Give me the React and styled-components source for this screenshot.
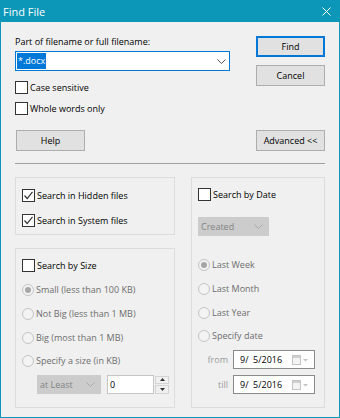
import styled, { createGlobalStyle } from "styled-components";

const GlobalStyle = createGlobalStyle`
  html, body {
    margin: 0;
    padding: 0;
    background: #f0f0f0;
  }
  body {
    font-family: "Open Sans", "Noto Sans", sans-serif;
    font-size: 9px;
    color: #000;
  }
  * {
    box-sizing: border-box;
  }
`;

const Window = styled.div`
  width: 340px;
  height: 418px;
  border: 1px solid #0c96b7;
  background: #f0f0f0;
  display: flex;
  flex-direction: column;
`;

const TitleBar = styled.div`
  height: 21px;
  flex: none;
  background: #0c96b7;
  color: #fff;
  display: flex;
  align-items: center;
  justify-content: space-between;
  padding: 0 8px 0 2px;
  font-size: 11px;
`;

const Body = styled.div`
  padding: 12px 14px 0 14px;
  display: flex;
  flex-direction: column;
`;

const TopSection = styled.div`
  display: flex;
  justify-content: space-between;
  align-items: flex-start;
`;

const LeftCol = styled.div`
  width: 215px;
  display: flex;
  flex-direction: column;
`;

const RightCol = styled.div`
  width: 69px;
  margin-top: 2px;
  display: flex;
  flex-direction: column;
  gap: 8px;
`;

const Label = styled.div`
  height: 15px;
  line-height: 15px;
`;

const Combo = styled.div`
  margin-top: 2px;
  height: 20px;
  background: #fff;
  border: 1px solid #0078d7;
  display: flex;
  align-items: center;
  justify-content: space-between;
  padding: 0 3px 0 1px;
`;

const Selected = styled.span`
  background: #0078d7;
  color: #fff;
  line-height: 16px;
  padding: 0 1px;
`;

const CheckRow = styled.label`
  display: flex;
  align-items: center;
  gap: 2px;
  height: 17px;
  margin-top: ${(p) => p.$mt || 0}px;
  color: ${(p) => (p.$disabled ? "#6d6d6d" : "#000")};
  white-space: nowrap;
`;

const Box = styled.span`
  width: 13px;
  height: 13px;
  flex: none;
  background: #fff;
  border: 1px solid #333;
  display: flex;
  align-items: center;
  justify-content: center;
`;

const Radio = styled.span`
  width: 12px;
  height: 12px;
  flex: none;
  border-radius: 50%;
  border: 1px solid #c4c4c4;
  background: #f3f3f3;
  display: flex;
  align-items: center;
  justify-content: center;
  &::after {
    content: "";
    width: 6px;
    height: 6px;
    border-radius: 50%;
    background: ${(p) => (p.$on ? "#a6a6a6" : "transparent")};
  }
`;

const Button = styled.div`
  width: 69px;
  height: 21px;
  background: #e1e1e1;
  border: 1px solid ${(p) => (p.$default ? "#0078d7" : "#adadad")};
  box-shadow: ${(p) => (p.$default ? "inset 0 0 0 1px #0078d7" : "none")};
  display: flex;
  align-items: center;
  justify-content: center;
`;

const ButtonRow = styled.div`
  margin-top: 13px;
  display: flex;
  justify-content: space-between;
  padding-left: 1px;
`;

const Separator = styled.div`
  margin-top: 12px;
  height: 1px;
  background: #a0a0a0;
`;

const Groups = styled.div`
  margin-top: 13px;
  display: grid;
  grid-template-columns: 160px 134px;
  column-gap: 16px;
`;

const Stack = styled.div`
  display: flex;
  flex-direction: column;
  gap: 13px;
`;

const GroupBox = styled.div`
  height: ${(p) => p.$h}px;
  border: 1px solid #dcdcdc;
  padding: ${(p) => p.$pt}px 0 0 6px;
  display: flex;
  flex-direction: column;
`;

const InlineRow = styled.div`
  display: flex;
  align-items: center;
  margin-top: ${(p) => p.$mt || 0}px;
  margin-left: ${(p) => p.$ml || 0}px;
  gap: ${(p) => p.$gap || 0}px;
`;

const DisabledSelect = styled.div`
  width: ${(p) => p.$w}px;
  height: 19px;
  background: #cccccc;
  border: 1px solid #cccccc;
  color: #838383;
  display: flex;
  align-items: center;
  justify-content: space-between;
  padding: 0 5px 0 2px;
`;

const NumberInput = styled.div`
  width: 47px;
  height: 19px;
  background: #fff;
  border: 1px solid #c6c6c6;
  padding-left: 2px;
  display: flex;
  align-items: center;
`;

const Spinner = styled.div`
  width: 14px;
  height: 18px;
  display: flex;
  flex-direction: column;
  gap: 1px;
  margin-left: 1px;
`;

const SpinHalf = styled.div`
  flex: 1;
  border: 1px solid #d4d4d4;
  background: #f0f0f0;
  display: flex;
  align-items: center;
  justify-content: center;
`;

const DateLabel = styled.span`
  width: 30px;
  text-align: right;
  color: #9a9a9a;
`;

const DateInput = styled.div`
  width: 82px;
  height: 19px;
  background: #fff;
  border: 1px solid #8a8a8a;
  display: flex;
  align-items: center;
  justify-content: space-between;
  padding: 0 6px 0 6px;
  white-space: pre;
`;

const Chevron = ({ color = "#555" }) => (
  <svg width="9" height="5" viewBox="0 0 9 5">
    <polyline points="0.5,0.5 4.5,4.5 8.5,0.5" fill="none" stroke={color} strokeWidth="1" />
  </svg>
);

const Check = () => (
  <svg width="11" height="11" viewBox="0 0 11 11">
    <polyline points="1.5,5.5 4.2,8.5 9.5,1.8" fill="none" stroke="#333" strokeWidth="1.2" />
  </svg>
);

const Checkbox = ({ checked, children, mt }) => (
  <CheckRow $mt={mt}>
    <Box>{checked && <Check />}</Box>
    {children}
  </CheckRow>
);

const RadioRow = ({ on, children, mt }) => (
  <CheckRow $mt={mt} $disabled>
    <Radio $on={on} />
    {children}
  </CheckRow>
);

const Triangle = ({ up }) => (
  <svg width="5" height="3" viewBox="0 0 5 3">
    <polygon points={up ? "0,3 5,3 2.5,0" : "0,0 5,0 2.5,3"} fill="#333" />
  </svg>
);

const CalendarIcon = () => (
  <svg width="16" height="10" viewBox="0 0 16 10">
    <rect x="0.5" y="0.5" width="8" height="9" fill="#f4f4f4" stroke="#c4c4c4" />
    <rect x="1" y="1" width="7" height="2" fill="#d0d0d0" />
    <polygon points="11,4 16,4 13.5,6.5" fill="#c4c4c4" />
  </svg>
);

const DateRow = ({ label, mt }) => (
  <InlineRow $mt={mt} $gap={5}>
    <DateLabel>{label}</DateLabel>
    <DateInput>
      <span>{"9/  5/2016"}</span>
      <CalendarIcon />
    </DateInput>
  </InlineRow>
);

export default function App() {
  return (
    <>
      <GlobalStyle />
      <Window>
        <TitleBar>
          <span>Find File</span>
          <svg width="9" height="9" viewBox="0 0 9 9">
            <path d="M0.5 0.5 L8.5 8.5 M8.5 0.5 L0.5 8.5" stroke="#fff" strokeWidth="1" />
          </svg>
        </TitleBar>
        <Body>
          <TopSection>
            <LeftCol>
              <Label>Part of filename or full filename:</Label>
              <Combo>
                <Selected>*.docx</Selected>
                <Chevron />
              </Combo>
              <Checkbox mt={8}>Case sensitive</Checkbox>
              <Checkbox mt={4}>Whole words only</Checkbox>
            </LeftCol>
            <RightCol>
              <Button $default>Find</Button>
              <Button>Cancel</Button>
            </RightCol>
          </TopSection>
          <ButtonRow>
            <Button>Help</Button>
            <Button>Advanced &lt;&lt;</Button>
          </ButtonRow>
          <Separator />
          <Groups>
            <Stack>
              <GroupBox $h={58} $pt={9}>
                <Checkbox checked>Search in Hidden files</Checkbox>
                <Checkbox checked mt={8}>Search in System files</Checkbox>
              </GroupBox>
              <GroupBox $h={160} $pt={8}>
                <Checkbox>Search by Size</Checkbox>
                <RadioRow on mt={7}>Small (less than 100 KB)</RadioRow>
                <RadioRow mt={7}>Not Big (less than 1 MB)</RadioRow>
                <RadioRow mt={7}>Big (most than 1 MB)</RadioRow>
                <RadioRow mt={6}>Specify a size (in KB)</RadioRow>
                <InlineRow $mt={6} $ml={15} $gap={6}>
                  <DisabledSelect $w={64}>
                    <span>at Least</span>
                    <Chevron color="#ababab" />
                  </DisabledSelect>
                  <InlineRow>
                    <NumberInput>0</NumberInput>
                    <Spinner>
                      <SpinHalf><Triangle up /></SpinHalf>
                      <SpinHalf><Triangle /></SpinHalf>
                    </Spinner>
                  </InlineRow>
                </InlineRow>
              </GroupBox>
            </Stack>
            <GroupBox $h={231} $pt={8}>
              <Checkbox>Search by Date</Checkbox>
              <InlineRow $mt={14}>
                <DisabledSelect $w={71}>
                  <span>Created</span>
                  <Chevron color="#ababab" />
                </DisabledSelect>
              </InlineRow>
              <RadioRow on mt={20}>Last Week</RadioRow>
              <RadioRow mt={7}>Last Month</RadioRow>
              <RadioRow mt={7}>Last Year</RadioRow>
              <RadioRow mt={6}>Specify date</RadioRow>
              <DateRow label="from" mt={6} />
              <DateRow label="till" mt={6} />
            </GroupBox>
          </Groups>
        </Body>
      </Window>
    </>
  );
}
